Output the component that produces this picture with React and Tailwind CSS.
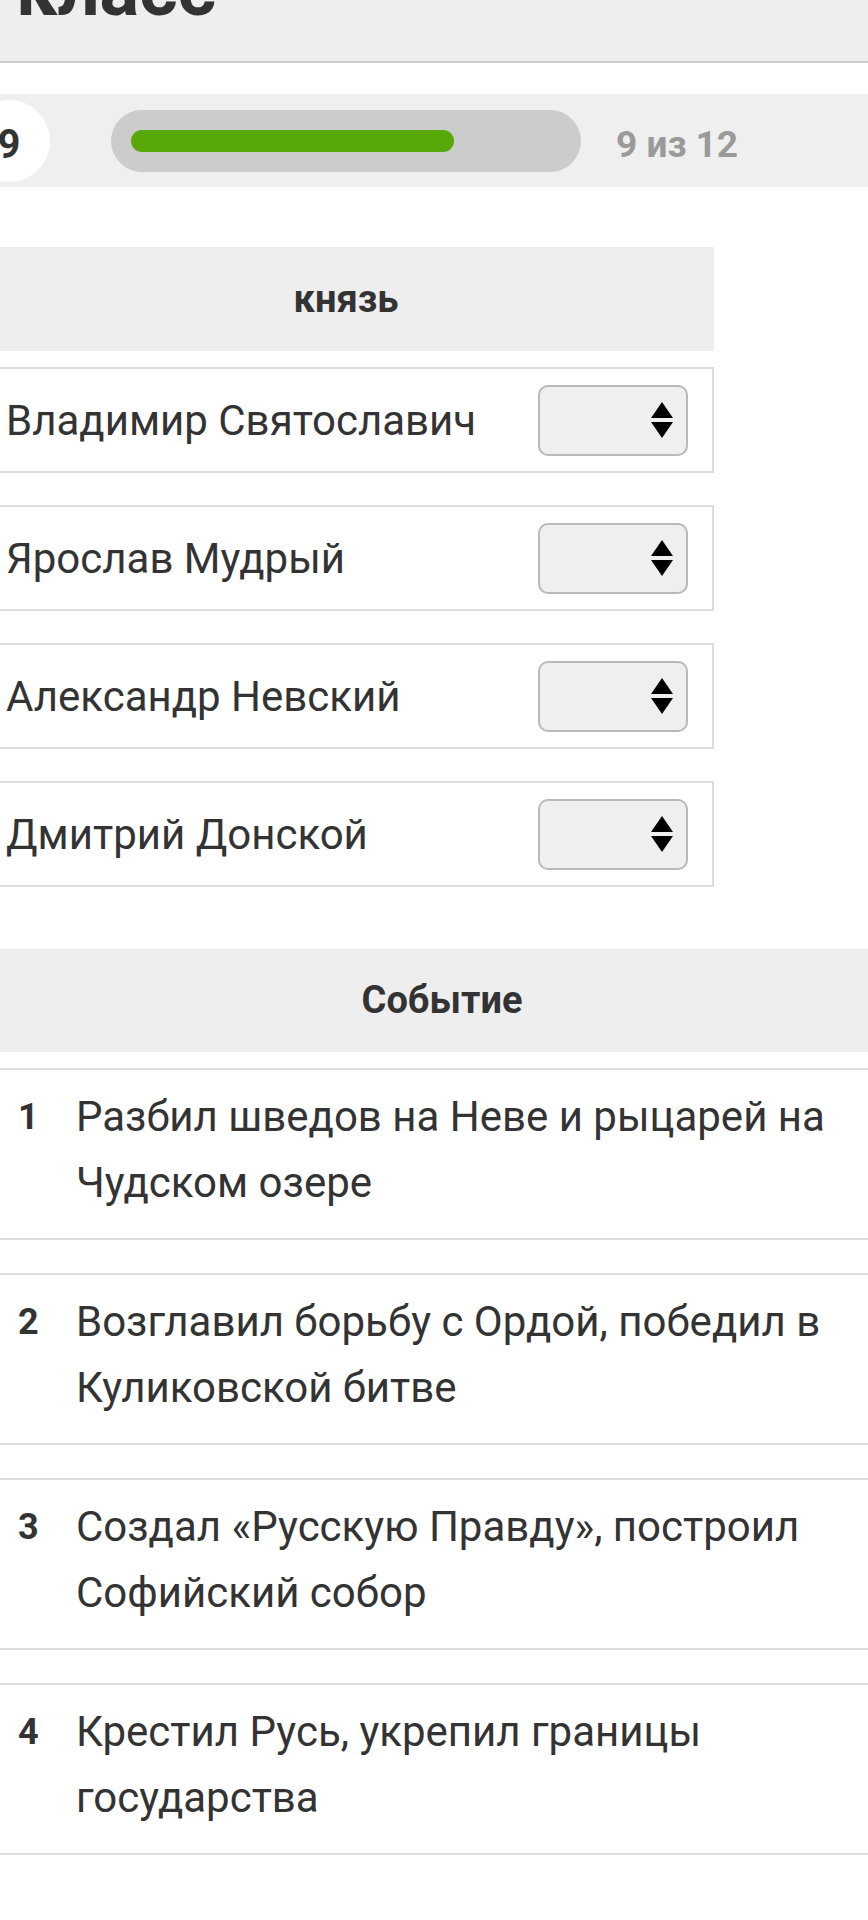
import React from "react";

const princes = [
  "Владимир Святославич",
  "Ярослав Мудрый",
  "Александр Невский",
  "Дмитрий Донской",
];

const events = [
  "Разбил шведов на Неве и рыцарей на Чудском озере",
  "Возглавил борьбу с Ордой, победил в Куликовской битве",
  "Создал «Русскую Правду», построил Софийский собор",
  "Крестил Русь, укрепил границы государства",
];

const answered = 9;
const total = 12;

// empty select with the native up/down arrows
const SelectBox = () => (
  <div className="flex h-[71px] w-[150px] shrink-0 items-center justify-end rounded-[10px] border-2 border-[#b9b9b9] bg-[#efefef] pr-[13px]">
    <svg width="22" height="36" viewBox="0 0 22 36" fill="#000">
      <path d="M11 0 L22 16 L0 16 Z" />
      <path d="M0 20 L22 20 L11 36 Z" />
    </svg>
  </div>
);

const App = () => {
  return (
    <div className="min-h-[1920px] w-[868px] overflow-hidden bg-white font-['Roboto',sans-serif] text-[#333]">
      {/* page title */}
      <header className="h-[63px] overflow-hidden border-b-2 border-[#cccccc] bg-[#eeeeee] pl-[16px]">
        <h1 className="-mt-[47px] text-[74px] font-bold leading-none">класс</h1>
      </header>

      {/* progress */}
      <div className="mt-[31px] flex h-[93px] items-center bg-[#efefef]">
        <div className="-ml-[32px] flex h-[82px] w-[82px] shrink-0 items-center justify-center rounded-full bg-white pt-[8px] text-[40px] font-bold">
          {answered}
        </div>
        <div className="ml-[61px] flex h-[62px] w-[470px] shrink-0 items-center rounded-full bg-[#cccccc] px-[20px]">
          <div
            className="h-[22px] rounded-full bg-[#58a80a]"
            style={{ width: `${(answered / total) * 100}%` }}
          ></div>
        </div>
        <div className="ml-[35px] pt-[8px] text-[37px] font-bold text-[#9a9a9a]">
          {answered} из {total}
        </div>
      </div>

      {/* princes */}
      <div className="-ml-[22px] mt-[60px] w-[736px]">
        <div className="flex h-[104px] items-center justify-center bg-[#eeeeee] text-[38px] font-bold">
          князь
        </div>
        <div className="mt-[16px] flex flex-col gap-[32px]">
          {princes.map((name) => (
            <div
              key={name}
              className="flex h-[106px] items-center justify-between border-2 border-[#dddddd] pl-[26px] pr-[24px] text-[42px]"
            >
              <span>{name}</span>
              <SelectBox />
            </div>
          ))}
        </div>
      </div>

      {/* events */}
      <div className="-ml-[22px] mt-[62px] w-[928px]">
        <div className="flex h-[103px] items-center justify-center bg-[#eeeeee] text-[38px] font-bold">
          Событие
        </div>
        <div className="mt-[16px] flex flex-col gap-[33px]">
          {events.map((text, i) => (
            <div
              key={i}
              className="flex h-[172px] border-2 border-[#dddddd] pb-[22px] pl-[38px] pr-[30px] pt-[14px]"
            >
              <div className="w-[58px] shrink-0 text-[36px] font-bold leading-[66px]">
                {i + 1}
              </div>
              <div className="text-[42px] leading-[66px]">{text}</div>
            </div>
          ))}
        </div>
      </div>
    </div>
  );
};

export default App;
